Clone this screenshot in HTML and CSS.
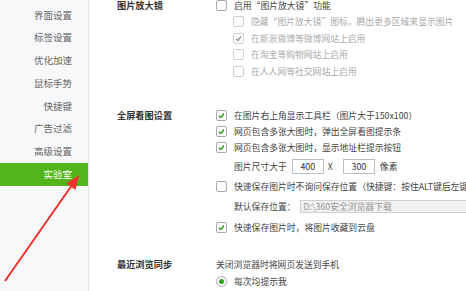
FILE: index.html
```html
<!DOCTYPE html>
<html lang="zh-CN">
<head>
    <meta charset="UTF-8">
    <title>实验室</title>
    <link rel="stylesheet" href="styles.css">
</head>
<body>
    <div class="page">
        <ul class="sidebar">
            <li>界面设置</li>
            <li>标签设置</li>
            <li>优化加速</li>
            <li>鼠标手势</li>
            <li>快捷键</li>
            <li>广告过滤</li>
            <li>高级设置</li>
            <li class="active">实验室</li>
        </ul>

        <div class="main">
            <!-- 图片放大镜 -->
            <div class="section first">
                <div class="heading">图片放大镜</div>
                <div class="options">
                    <label class="row"><span class="box"></span>启用“图片放大镜”功能</label>
                    <label class="row sub disabled"><span class="box"></span>隐藏“图片放大镜”图标，腾出更多区域来显示图片</label>
                    <label class="row sub disabled"><span class="box checked"><svg viewBox="0 0 10 10"><path d="M2.2 5.2 L4.2 7.2 L7.8 2.8"/></svg></span>在新浪微博等微博网站上启用</label>
                    <label class="row sub disabled"><span class="box"></span>在淘宝等购物网站上启用</label>
                    <label class="row sub disabled"><span class="box"></span>在人人网等社交网站上启用</label>
                </div>
            </div>

            <!-- 全屏看图设置 -->
            <div class="section second">
                <div class="heading">全屏看图设置</div>
                <div class="options">
                    <label class="row"><span class="box checked"><svg viewBox="0 0 10 10"><path d="M2.2 5.2 L4.2 7.2 L7.8 2.8"/></svg></span>在图片右上角显示工具栏（图片大于150x100）</label>
                    <label class="row"><span class="box checked"><svg viewBox="0 0 10 10"><path d="M2.2 5.2 L4.2 7.2 L7.8 2.8"/></svg></span>网页包含多张大图时，弹出全屏看图提示条</label>
                    <label class="row"><span class="box checked"><svg viewBox="0 0 10 10"><path d="M2.2 5.2 L4.2 7.2 L7.8 2.8"/></svg></span>网页包含多张大图时，显示地址栏提示按钮</label>
                    <div class="row indent size-row">
                        图片尺寸大于
                        <span class="num">400</span>
                        <span class="times">X</span>
                        <span class="num">300</span>
                        <span class="unit">像素</span>
                    </div>
                    <label class="row save-row"><span class="box"></span>快速保存图片时不询问保存位置（快捷键：按住ALT键后左键点击图片）</label>
                    <div class="row indent path-row">
                        默认保存位置：
                        <span class="path">D:\360安全浏览器下载</span>
                    </div>
                    <label class="row cloud-row"><span class="box checked"><svg viewBox="0 0 10 10"><path d="M2.2 5.2 L4.2 7.2 L7.8 2.8"/></svg></span>快速保存图片时，将图片收藏到云盘</label>
                </div>
            </div>

            <!-- 最近浏览同步 -->
            <div class="section third">
                <div class="heading">最近浏览同步</div>
                <div class="options">
                    <div class="row">关闭浏览器时将网页发送到手机</div>
                    <label class="row radio-row"><span class="radio"></span>每次均提示我</label>
                </div>
            </div>
        </div>

        <svg class="arrow" viewBox="0 0 466 291">
            <line x1="5" y1="281" x2="71" y2="186.5"/>
            <polygon points="79,175 75.5,190 66.5,183.5"/>
        </svg>
    </div>
</body>
</html>
```

FILE: styles.css
```css
body {
    margin: 0;
    font-family: "Noto Sans CJK SC", "Noto Sans", sans-serif;
    background: #fff;
    color: #444;
}

.page {
    position: relative;
    display: flex;
    width: 466px;
    height: 291px;
    overflow: hidden;
}

/* Sidebar */
.sidebar {
    list-style: none;
    margin: 0;
    padding: 3.6px 0 0;
    width: 88px;
    flex-shrink: 0;
    background: #f7f8fa;
    border-right: 1px solid #e2e4e8;
}

.sidebar li {
    height: 22.75px;
    line-height: 22.75px;
    padding-right: 16px;
    text-align: right;
    font-size: 9.5px;
    color: #666;
}

.sidebar li.active {
    background: #52b51b;
    color: #fff;
}

/* Main */
.main {
    flex: 1;
    padding-left: 28px;
    white-space: nowrap;
    font-size: 8.8px;
}

.section {
    display: flex;
}

.section.first { margin-top: -3px; }
.section.second { margin-top: 27.5px; }
.section.third { margin-top: 20px; }

.heading {
    width: 99px;
    flex-shrink: 0;
    height: 16px;
    line-height: 16px;
    font-weight: bold;
    font-size: 9.2px;
    color: #333;
}

.options {
    display: flex;
    flex-direction: column;
}

.row {
    display: flex;
    align-items: center;
    height: 16.5px;
}

.second .row { height: 16px; }
.second .size-row { height: 22px; }
.second .save-row { height: 18px; }
.second .path-row { height: 23px; }
.second .cloud-row { height: 18px; }
.third .radio-row { height: 18px; }

.row.sub {
    padding-left: 17px;
}

.row.indent {
    padding-left: 18px;
}

.row.disabled {
    color: #aaa;
}

/* Checkbox */
.box {
    width: 9px;
    height: 9px;
    margin-right: 7px;
    border: 1px solid #a9a9a9;
    border-radius: 2px;
    background: #fff;
    flex-shrink: 0;
    display: flex;
}

.disabled .box {
    border-color: #cfcfcf;
}

.box svg {
    width: 9px;
    height: 9px;
}

.box svg path {
    fill: none;
    stroke: #2f9a12;
    stroke-width: 1.6;
}

.disabled .box svg path {
    stroke: #999;
}

/* Radio */
.radio {
    width: 9px;
    height: 9px;
    margin-right: 7px;
    border: 1px solid #a9a9a9;
    border-radius: 50%;
    display: flex;
    align-items: center;
    justify-content: center;
}

.radio::after {
    content: "";
    width: 5px;
    height: 5px;
    border-radius: 50%;
    background: #2aa515;
}

/* Size inputs */
.num {
    display: inline-block;
    width: 30px;
    height: 13px;
    line-height: 13px;
    margin-left: 5px;
    border: 1px solid #bdbdbd;
    text-align: center;
    color: #333;
}

.times {
    margin: 0 5px 0 4px;
}

.unit {
    margin-left: 5px;
}

.path {
    display: inline-block;
    width: 164px;
    height: 11px;
    line-height: 11px;
    margin-left: 4px;
    padding-left: 3px;
    border: 1px solid #cfcfcf;
    background: #f0f0f0;
    color: #999;
}

/* Red annotation arrow */
.arrow {
    position: absolute;
    left: 0;
    top: 0;
    width: 466px;
    height: 291px;
    pointer-events: none;
}

.arrow line {
    stroke: #f2302c;
    stroke-width: 2;
}

.arrow polygon {
    fill: #f2302c;
}
```
